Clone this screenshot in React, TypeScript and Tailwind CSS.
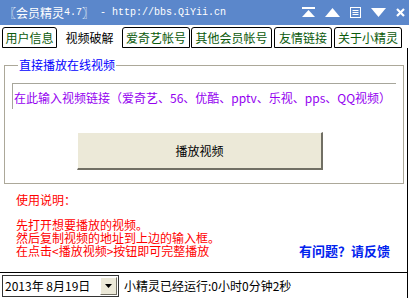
const cjk = { fontFamily: '"Noto Sans CJK SC", "Liberation Sans", sans-serif' };

function TitleIcons() {
    return (
        <div className="flex items-center gap-[10px] mr-[4px]">
            {/* pin to top */}
            <svg width="13" height="11" viewBox="0 0 13 11">
                <rect x="0" y="0" width="13" height="2" fill="white" />
                <polygon points="6.5,3 13,10 0,10" fill="white" />
            </svg>
            {/* up */}
            <svg width="15" height="9" viewBox="0 0 15 9">
                <polygon points="7.5,0 15,9 0,9" fill="white" />
            </svg>
            {/* menu */}
            <svg width="11" height="11" viewBox="0 0 11 11">
                <rect x="0.5" y="0.5" width="10" height="10" fill="none" stroke="white" />
                <rect x="2.5" y="3" width="6" height="1" fill="white" />
                <rect x="2.5" y="5" width="6" height="1" fill="white" />
                <rect x="2.5" y="7" width="6" height="1" fill="white" />
            </svg>
            {/* down */}
            <svg width="15" height="9" viewBox="0 0 15 9">
                <polygon points="0,0 15,0 7.5,9" fill="white" />
            </svg>
            {/* close */}
            <svg width="9" height="9" viewBox="0 0 9 9">
                <path d="M1 1 L8 8 M8 1 L1 8" stroke="white" strokeWidth="2.2" />
            </svg>
        </div>
    );
}

function Tab({ label, w }: { label: string; w: string }) {
    return (
        <div
            className={`h-[21px] ${w} border border-black rounded-t-[3px] flex items-center justify-center text-[12px] text-[#0b5a0b] bg-white`}
        >
            {label}
        </div>
    );
}

export default function App() {
    return (
        <div className="w-[409px] h-[298px] bg-white overflow-hidden flex flex-col text-[12px] leading-none" style={cjk}>
            {/* Title bar */}
            <div className="h-[25px] bg-[#5b87cb] flex items-center justify-between pl-[4px] text-white shrink-0">
                <div className="flex items-center">
                    <span className="text-[12px]">〖会员精灵</span>
                    <span className="text-[10px]" style={{ fontFamily: '"Liberation Mono", monospace' }}>4.7</span>
                    <span className="text-[12px]">〗</span>
                    <span className="text-[10px] whitespace-pre" style={{ fontFamily: '"Liberation Mono", monospace' }}>
                        {' - http://bbs.QiYii.cn'}
                    </span>
                </div>
                <TitleIcons />
            </div>

            {/* Tabs */}
            <div className="h-[23px] flex items-end shrink-0 pl-[2px]">
                <Tab label="用户信息" w="w-[55px]" />
                <div className="h-[21px] w-[65px] flex items-center justify-center text-black">视频破解</div>
                <Tab label="爱奇艺帐号" w="w-[68px]" />
                <div className="w-[1px]" />
                <Tab label="其他会员帐号" w="w-[81px]" />
                <div className="w-[2px]" />
                <Tab label="友情链接" w="w-[58px]" />
                <div className="w-[2px]" />
                <Tab label="关于小精灵" w="w-[68px]" />
            </div>

            {/* Content */}
            <div className="h-[224px] shrink-0 mr-[1px] border-r border-black pt-[11px] px-[4px] flex flex-col">
                <fieldset className="h-[125px] border border-[#aca899] mr-[4px] px-[7px]">
                    <legend className="ml-[6px] px-[1px] text-[#0000ff] leading-[12px]">直接播放在线视频</legend>
                    <div className="mt-[12px] h-[26px] w-[384px] border-t border-l border-[#a7a69b] pt-[8px] pl-[1px] text-[#9400f0] whitespace-nowrap">
                        在此输入视频链接（爱奇艺、56、优酷、pptv、乐视、pps、QQ视频）
                    </div>
                    <div className="mt-[23px] ml-[65px] w-[246px] h-[38px] bg-[#ece9d8] border-t border-l border-white border-r-2 border-b-2 border-r-[#716f64] border-b-[#716f64] flex items-center justify-center text-black">
                        播放视频
                    </div>
                </fieldset>

                <div className="flex items-end justify-between mt-[9px] pl-[12px] pr-[13px]">
                    <div className="text-[#ff0000] leading-[13px]">
                        <div className="mb-[12px]">使用说明：</div>
                        <div>先打开想要播放的视频。</div>
                        <div>然后复制视频的地址到上边的输入框。</div>
                        <div>在点击&lt;播放视频&gt;按钮即可完整播放</div>
                    </div>
                    <div className="text-[#0022ee] font-bold text-[13px] leading-[13px]">有问题？请反馈</div>
                </div>
            </div>

            {/* Status bar */}
            <div className="flex-1 mr-[1px] border-t border-r border-black flex items-center pl-[2px]">
                <div className="w-[117px] h-[22px] border border-[#333] flex items-center justify-between">
                    <span className="pl-[2px] text-black">2013年 8月19日</span>
                    <div className="w-[17px] h-[18px] mr-[1px] bg-[#ece9d8] border border-t-white border-l-white border-r-[#716f64] border-b-[#716f64] flex items-center justify-center">
                        <svg width="7" height="4" viewBox="0 0 7 4">
                            <polygon points="0,0 7,0 3.5,4" fill="black" />
                        </svg>
                    </div>
                </div>
                <span className="ml-[5px] text-black">小精灵已经运行:0小时0分钟2秒</span>
            </div>
        </div>
    );
}
